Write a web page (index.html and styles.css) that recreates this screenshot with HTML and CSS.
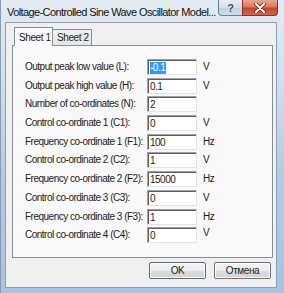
FILE: index.html
```html
<!DOCTYPE html>
<html lang="en">
<head>
  <meta charset="UTF-8">
  <title>Voltage-Controlled Sine Wave Oscillator Model</title>
  <link rel="stylesheet" href="styles.css">
</head>
<body>
  <div class="window">
    <div class="titlebar">
      <span class="caption">Voltage-Controlled Sine Wave Oscillator Model...</span>
      <div class="caption-buttons">
        <div class="cap-btn cap-help">?</div>
        <div class="cap-btn cap-close">
          <svg width="12" height="10" viewBox="0 0 12 10">
            <path d="M2 1 L10 9 M10 1 L2 9" stroke="#5a1a10" stroke-width="3.4" stroke-linecap="round"/>
            <path d="M2 1 L10 9 M10 1 L2 9" stroke="#fff" stroke-width="2" stroke-linecap="round"/>
          </svg>
        </div>
      </div>
    </div>
    <div class="client">
      <div class="tabs">
        <div class="tab tab-active">Sheet 1</div>
        <div class="tab">Sheet 2</div>
      </div>
      <div class="panel">
        <div class="form">
          <span class="label">Output peak low value (L):</span>
          <div class="field"><span class="selected">-0.1</span></div>
          <span class="unit">V</span>

          <span class="label">Output peak high value (H):</span>
          <div class="field">0.1</div>
          <span class="unit">V</span>

          <span class="label">Number of co-ordinates (N):</span>
          <div class="field">2</div>
          <span class="unit"></span>

          <span class="label">Control co-ordinate 1 (C1):</span>
          <div class="field">0</div>
          <span class="unit">V</span>

          <span class="label">Frequency co-ordinate 1 (F1):</span>
          <div class="field">100</div>
          <span class="unit">Hz</span>

          <span class="label">Control co-ordinate 2 (C2):</span>
          <div class="field">1</div>
          <span class="unit">V</span>

          <span class="label">Frequency co-ordinate 2 (F2):</span>
          <div class="field">15000</div>
          <span class="unit">Hz</span>

          <span class="label">Control co-ordinate 3 (C3):</span>
          <div class="field">0</div>
          <span class="unit">V</span>

          <span class="label">Frequency co-ordinate 3 (F3):</span>
          <div class="field">1</div>
          <span class="unit">Hz</span>

          <span class="label">Control co-ordinate 4 (C4):</span>
          <div class="field">0</div>
          <span class="unit unit-up">V</span>
        </div>
      </div>
      <div class="buttons">
        <div class="btn btn-default">OK</div>
        <div class="btn">Отмена</div>
      </div>
    </div>
  </div>
</body>
</html>
```

FILE: styles.css
```css
*,
*::before,
*::after {
  margin: 0;
  padding: 0;
  box-sizing: border-box;
}
body {
  width: 284px;
  height: 293px;
  overflow: hidden;
  font-family: "Liberation Sans", Arial, sans-serif;
  color: #1b1b1b;
}
.window {
  width: 284px;
  height: 293px;
  display: flex;
  flex-direction: column;
  background: linear-gradient(to bottom, #e4ebf2 0, #d3e0ed 25%, #b3cbe5 60%, #a9c3e0 100%);
  border-left: 1px solid #8a9bb0;
}
.titlebar {
  height: 22px;
  display: flex;
  align-items: flex-start;
  padding-left: 6px;
}
.caption {
  font-size: 11px;
  letter-spacing: -0.6px;
  line-height: 14px;
  padding-top: 5px;
  color: #111;
  white-space: nowrap;
}
.caption-buttons {
  margin-left: auto;
  margin-right: 6px;
  display: flex;
}
.cap-btn {
  height: 16px;
  display: flex;
  align-items: center;
  justify-content: center;
  border: 1px solid #6f7f94;
  border-top: none;
}
.cap-help {
  width: 24px;
  border-right: none;
  border-bottom-left-radius: 4px;
  background: linear-gradient(to bottom, #e6edf5 0, #d5dfeb 50%, #c3d0df 51%, #cfdbe8 100%);
  font-size: 11px;
  font-weight: bold;
  color: #3b4654;
  text-shadow: 0 0 2px #fff;
}
.cap-close {
  width: 36px;
  border-color: #8c2f20;
  border-bottom-right-radius: 4px;
  background: linear-gradient(to bottom, #e7a595 0, #d77a64 45%, #c5442a 55%, #d2664c 100%);
}
.client {
  flex: 1;
  margin: 0 7px 5px 4px;
  background: #f0f0f0;
  border: 1px solid #8d9db2;
  padding: 4px 3px 0 6px;
  display: flex;
  flex-direction: column;
}
.tabs {
  display: flex;
  height: 18px;
  padding-left: 2px;
  font-size: 10px;
  letter-spacing: -0.4px;
  position: relative;
  z-index: 1;
}
.tab {
  height: 16px;
  margin-top: 2px;
  padding-left: 4px;
  width: 39px;
  line-height: 16px;
  white-space: nowrap;
  border: 1px solid #898c95;
  border-bottom: none;
  border-left: none;
  background: linear-gradient(to bottom, #f2f2f2, #e3e3e3);
}
.tab-active {
  height: 19px;
  margin-top: 0;
  line-height: 19px;
  border-left: 1px solid #898c95;
  background: #f9f9f9;
}
.panel {
  height: 213px;
  border: 1px solid #898c95;
  background: #f9f9f9;
  padding: 13px 0 0 12px;
}
.form {
  display: grid;
  grid-template-columns: 122px 50px auto;
  grid-auto-rows: 18.7px;
  font-size: 10px;
  letter-spacing: -0.5px;
}
.label {
  line-height: 16px;
  white-space: nowrap;
}
.field {
  height: 16px;
  line-height: 13px;
  background: #fff;
  border: 1px solid;
  border-color: #a0a0a0 #e3e3e3 #e3e3e3 #a0a0a0;
  box-shadow: inset 1px 1px 0 #5e5e5e;
  padding-top: 1px;
  padding-left: 2px;
}
.selected {
  background: #3399ff;
  color: #fff;
  padding: 0 1px 1px 0;
}
.unit {
  line-height: 16px;
  padding-left: 6px;
}
.unit-up {
  line-height: 12px;
}
.buttons {
  display: flex;
  justify-content: flex-end;
  gap: 8px;
  margin-top: 4px;
  padding-right: 2px;
}
.btn {
  width: 57px;
  height: 17px;
  line-height: 15px;
  text-align: center;
  font-size: 10px;
  letter-spacing: -0.4px;
  border: 1px solid #707070;
  border-radius: 2px;
  background: linear-gradient(to bottom, #f4f4f4 0, #ececec 50%, #dedede 51%, #d2d2d2 100%);
  box-shadow: inset 0 0 0 1px #fbfbfb;
}
.btn-default {
  border-color: #5e6a78;
}
```
